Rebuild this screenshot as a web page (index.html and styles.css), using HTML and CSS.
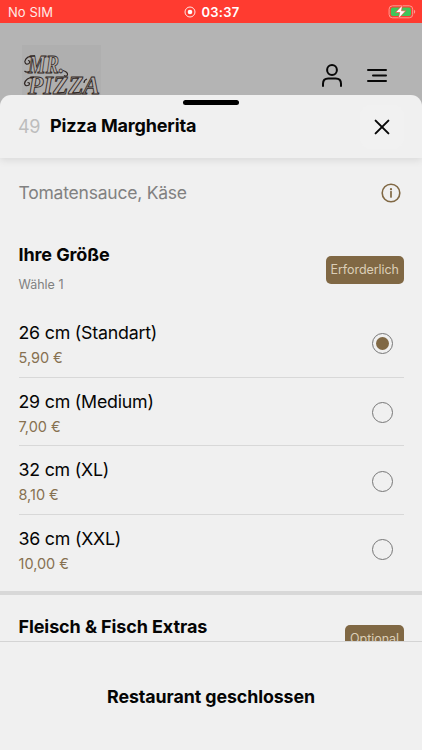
FILE: index.html
```html
<!DOCTYPE html>
<html lang="de">
<head>
<meta charset="utf-8">
<title>Pizza Margherita</title>
<link rel="stylesheet" href="styles.css">
</head>
<body>
<div class="screen">
  <div class="status">
    <span class="carrier">No SIM</span>
    <span class="clock">
      <svg width="12" height="12" viewBox="0 0 12 12"><circle cx="6" cy="6" r="5" fill="none" stroke="#ffe9e6"/><circle cx="6" cy="6" r="2.3" fill="#fff"/></svg>
      <span class="time">03:37</span>
    </span>
    <svg class="battery" width="28" height="14" viewBox="0 0 28 14">
      <rect x="1.100" y=".8" width="23.600" height="12" rx="3.400" fill="none" stroke="#ff9c90"/>
      <rect x="2.800" y="2.500" width="20.200" height="8.600" rx="2" fill="#3fc55a"/>
      <path d="M26 4.800v4q1.200-.5 1.200-2t-1.200-2z" fill="#ff9c90"/>
      <path d="M14.500 0 7.500 7.500h4.300L10.300 13.700 17.800 5.800h-4.300z" fill="#fff" stroke="#ff3b30" stroke-width=".6"/>
    </svg>
  </div>
  <header class="topbar">
    <svg class="logo" width="79" height="50" viewBox="0 0 79 50">
      <g class="logo-text">
        <text x="6" y="27.500" textLength="36" lengthAdjust="spacingAndGlyphs">MR.</text>
        <text x="6" y="49" textLength="72" lengthAdjust="spacingAndGlyphs">PIZZA</text>
      </g>
      <path class="swash" d="M13 10.800Q4 10.500 2.800 16.500Q3.500 20.500 7 18.500Q9 16 6 15.500M12 32.300Q4 32 2.500 38.500Q3.500 42 7 40Q8.500 37.500 5.500 37.500M41 25.500Q46 27 45.500 30Q44 32 42 30.500M2.500 26q2 2 5 .5M65 34q-3 1-3 4"/>
    </svg>
    <nav class="tools">
      <svg width="22" height="25" viewBox="0 0 22 25"><circle cx="11" cy="7" r="4.900"/><path d="M2 23v-2.200q0-5.300 5.300-5.300h7.400q5.300 0 5.300 5.300v2.200"/></svg>
      <svg width="22" height="25" viewBox="0 0 22 25"><path d="M2 7h18M7 12.500h13M2 18h18"/></svg>
    </nav>
  </header>
  <main class="sheet">
    <div class="grabber"></div>
    <div class="sheet-head">
      <span class="num">49</span>
      <h1>Pizza Margherita</h1>
      <span class="close"><svg width="16" height="16" viewBox="0 0 16 16"><path d="M1.600 1.600l12.800 12.800M14.400 1.600 1.600 14.400"/></svg></span>
    </div>
    <div class="content">
      <div class="desc">
        <span class="desc-text">Tomatensauce, Käse</span>
        <svg width="20" height="20" viewBox="0 0 20 20"><circle cx="10" cy="10" r="8.800" fill="none" stroke="#806844" stroke-width="1.600"/><circle cx="10" cy="6.200" r="1.100" fill="#806844"/><path d="M10 8.700v5.300" stroke="#806844" stroke-width="1.700" stroke-linecap="round"/></svg>
      </div>
      <section class="group">
        <div class="group-head">
          <div><h2>Ihre Größe</h2><p>Wähle 1</p></div>
          <span class="badge">Erforderlich</span>
        </div>
        <ul>
          <li><div><span class="name">26 cm (Standart)</span><span class="price">5,90 €</span></div><i class="radio on"></i></li>
          <li><div><span class="name">29 cm (Medium)</span><span class="price">7,00 €</span></div><i class="radio"></i></li>
          <li><div><span class="name">32 cm (XL)</span><span class="price">8,10 €</span></div><i class="radio"></i></li>
          <li><div><span class="name">36 cm (XXL)</span><span class="price">10,00 €</span></div><i class="radio"></i></li>
        </ul>
      </section>
      <section class="group extras">
        <div class="group-head">
          <h2>Fleisch &amp; Fisch Extras</h2>
          <span class="badge optional">Optional</span>
        </div>
      </section>
    </div>
    <footer><span>Restaurant geschlossen</span></footer>
  </main>
</div>
</body>
</html>
```

FILE: styles.css
```css
* { box-sizing: border-box; margin: 0; padding: 0; }
body { font-family: Inter, "Liberation Sans", sans-serif; background: #b4b4b4; color: #050505; }
svg { display: block; flex: none; }
.screen { width: 422px; height: 750px; display: flex; flex-direction: column; overflow: hidden; background: #b4b4b4; }
.status { height: 23px; flex: none; background: #ff3b30; color: #ffe9e6; display: grid; grid-template-columns: 1fr auto 1fr; align-items: center; padding: 0 6px 0 8px; font-size: 13px; line-height: 22px; }
.carrier { letter-spacing: .05px; padding-top: 1px; }
.clock { display: flex; align-items: center; gap: 5px; color: #fff; font-weight: 600; padding-top: 1px; }
.time { letter-spacing: .25px; }
.battery { justify-self: end; }
.topbar { height: 72px; flex: none; display: flex; justify-content: space-between; padding: 22px 34px 0 22px; }
.logo { background: #afafaf; }
.logo-text { font-family: "Liberation Serif", serif; font-size: 25.5px; font-style: italic; font-weight: 700; fill: #b5afac; stroke: #302724; stroke-width: .9; }
.swash { fill: none; stroke: #302724; stroke-width: 1.2; }
.tools { display: flex; gap: 23px; padding-top: 18px; }
.tools svg, .close svg { fill: none; stroke: #080808; stroke-width: 2; stroke-linecap: round; stroke-linejoin: round; }
.sheet { position: relative; height: 655px; flex: none; display: flex; flex-direction: column; background: #f0f0f0; border-radius: 11px 11px 0 0; }
.grabber { position: absolute; left: 183px; top: 5px; width: 56px; height: 5px; border-radius: 3px; background: #000; }
.sheet-head { height: 63px; flex: none; display: flex; align-items: center; padding: 0 18px 1px 18px; box-shadow: 0 2px 8px rgba(0,0,0,.1); clip-path: inset(0 0 -14px 0); }
.num { width: 32px; font-size: 18px; color: #bdbdbd; letter-spacing: -.4px; }
h1, h2 { font-size: 18px; line-height: 22px; font-weight: 700; white-space: nowrap; letter-spacing: -.1px; }
h1 { flex: 1; letter-spacing: -.16px; }
.close { width: 44px; height: 44px; display: grid; place-items: center; border-radius: 10px; background: #f1f1f1; margin-top: 2px; }
.content { flex: 1; min-height: 0; overflow: hidden; }
.desc { display: flex; justify-content: space-between; align-items: center; height: 69px; padding: 0 21px 0 18.5px; }
.desc-text { font-size: 17.5px; color: #818181; letter-spacing: -.22px; }
.group-head { display: flex; justify-content: space-between; align-items: center; padding: 0 18px 0 18.5px; height: 82px; }
.group-head p { font-size: 12.5px; line-height: 16px; margin-top: 11px; color: #808080; }
.badge { width: 78.5px; height: 28px; border-radius: 5px; background: #806844; color: #dccfb8; font-size: 12.5px; line-height: 28px; text-align: center; margin-top: 4px; white-space: nowrap; letter-spacing: -.06px; }
ul { list-style: none; padding: 0 18px 0 18.5px; }
li { height: 68.7px; display: flex; align-items: center; justify-content: space-between; padding: 2px 11px 0 0; border-bottom: 1px solid #d8d8d8; }
li:last-child { border-color: transparent; }
.name { display: block; font-size: 17.8px; line-height: 24px; letter-spacing: -.22px; margin-top: 1px; }
.price { display: block; font-size: 14.5px; line-height: 20px; margin-top: 3px; color: #877150; letter-spacing: -.02px; }
.radio { width: 21px; height: 21px; border: 1px solid #777; border-radius: 50%; display: grid; place-items: center; }
.on::after { content: ""; width: 13px; height: 13px; border-radius: 50%; background: #806844; }
.extras { border-top: 4px solid #d8d8d8; margin-top: 7.6px; }
.extras .group-head { align-items: flex-start; padding-top: 21px; }
.badge.optional { width: 59px; margin-top: 9px; }
footer { height: 109px; flex: none; border-top: 1px solid #d4d4d4; display: grid; place-items: center; font-size: 17.8px; font-weight: 700; letter-spacing: -.08px; }
```
